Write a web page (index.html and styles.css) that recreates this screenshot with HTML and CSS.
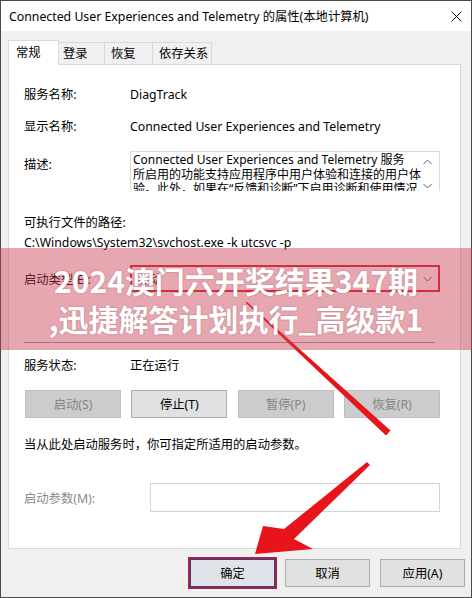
FILE: index.html
```html
<!DOCTYPE html>
<html lang="zh-CN">
<head>
    <meta charset="UTF-8">
    <title>Connected User Experiences and Telemetry 的属性</title>
    <link rel="stylesheet" href="styles.css">
</head>
<body>
    <div class="window">
        <div class="titlebar">
            <span class="title">Connected User Experiences and Telemetry 的属性(本地计算机)</span>
            <svg class="close" width="11" height="11" viewBox="0 0 11 11">
                <path d="M0.5 0.5 L10.5 10.5 M10.5 0.5 L0.5 10.5" stroke="#111" stroke-width="1" fill="none"/>
            </svg>
        </div>

        <div class="tabs">
            <div class="tab active">常规</div>
            <div class="tab tab-login">登录</div>
            <div class="tab tab-recover">恢复</div>
            <div class="tab tab-deps">依存关系</div>
        </div>

        <div class="panel">
            <div class="row">
                <span class="label">服务名称:</span>
                <span>DiagTrack</span>
            </div>
            <div class="row row-display">
                <span class="label">显示名称:</span>
                <span>Connected User Experiences and Telemetry</span>
            </div>
            <div class="row row-desc">
                <span class="label label-top">描述:</span>
                <div class="textbox">
                    <div class="textbox-text">Connected User Experiences and Telemetry 服务<br>所启用的功能支持应用程序中用户体验和连接的用户体<br>验。此外，如果在“反馈和诊断”下启用诊断和使用情况</div>
                    <div class="scroll">
                        <svg width="9" height="6" viewBox="0 0 9 6"><path d="M0.5 5 L4.5 1 L8.5 5" stroke="#606060" fill="none"/></svg>
                        <svg width="9" height="6" viewBox="0 0 9 6"><path d="M0.5 1 L4.5 5 L8.5 1" stroke="#606060" fill="none"/></svg>
                    </div>
                </div>
            </div>
            <div class="row row-exe">可执行文件的路径:</div>
            <div class="row">C:\Windows\System32\svchost.exe -k utcsvc -p</div>
            <div class="row row-startup">
                <span class="label">启动类型(E):</span>
                <div class="select">
                    <span>自动</span>
                    <svg width="9" height="6" viewBox="0 0 9 6"><path d="M0.5 1 L4.5 5 L8.5 1" stroke="#606060" fill="none"/></svg>
                </div>
            </div>
            <div class="separator"></div>
            <div class="row row-status">
                <span class="label">服务状态:</span>
                <span>正在运行</span>
            </div>
            <div class="service-buttons">
                <div class="btn disabled">启动(S)</div>
                <div class="btn">停止(T)</div>
                <div class="btn disabled">暂停(P)</div>
                <div class="btn disabled">恢复(R)</div>
            </div>
            <div class="row row-hint">当从此处启动服务时，你可指定所适用的启动参数。</div>
            <div class="row row-param">
                <span class="label label-param">启动参数(M):</span>
                <div class="input"></div>
            </div>
        </div>

        <div class="footer">
            <div class="btn dlg-btn ok">确定</div>
            <div class="btn dlg-btn">取消</div>
            <div class="btn dlg-btn">应用(A)</div>
        </div>

        <!-- annotation arrows drawn on the screenshot -->
        <svg class="arrows" width="472" height="598" viewBox="0 0 472 598">
            <polygon points="245.5,302.5 246.5,301.5 390.5,430.5 386,435.5" fill="#e8141b"/>
            <polygon points="255,554 263,526 284,529 367,462 370,465 294,539 313,549" fill="#e8141b"/>
        </svg>

        <div class="banner">
            <div>2024澳门六开奖结果347期</div>
            <div>,迅捷解答计划执行_高级款1</div>
        </div>
    </div>
</body>
</html>
```

FILE: styles.css
```css
/* Base */
* {
    margin: 0;
    padding: 0;
    box-sizing: border-box;
}

body {
    font-family: "Noto Sans", "Noto Sans CJK SC", sans-serif;
    font-size: 12.3px;
    color: #000;
    background: #fff;
}

/* Dialog window */
.window {
    position: relative;
    width: 472px;
    height: 598px;
    border: 1px solid #4a4a4a;
    background: #f0f0f0;
    display: flex;
    flex-direction: column;
}

.titlebar {
    height: 30px;
    background: #fff;
    display: flex;
    align-items: center;
    justify-content: space-between;
    padding: 0 9px 0 8px;
}

.close {
    display: block;
}

/* Tabs */
.tabs {
    display: flex;
    align-items: flex-start;
    margin-top: 9px;
    padding-left: 7px;
    position: relative;
    z-index: 1;
}

.tab {
    height: 22px;
    margin-top: 2px;
    line-height: 21px;
    padding-left: 6px;
    border: 1px solid #d9d9d9;
    border-left: none;
    border-bottom: none;
}

.tab.active {
    width: 51px;
    height: 25px;
    margin-top: 0;
    padding-left: 7px;
    line-height: 24px;
    background: #fff;
    border-left: 1px solid #d9d9d9;
}

.tab-login { width: 46px; padding-left: 4px; }
.tab-recover { width: 48px; }
.tab-deps { width: 59px; }

/* Main panel */
.panel {
    height: 485px;
    margin: -1px 10px 0 7px;
    padding: 19px 20px 0 15px;
    background: #fff;
    border: 1px solid #d9d9d9;
}

.row {
    display: flex;
    align-items: center;
    height: 20px;
}

.label {
    width: 106px;
    flex-shrink: 0;
}

.row-display { margin-top: 12px; }

.row-desc {
    margin-top: 15px;
    height: 40px;
    align-items: flex-start;
}

.label-top {
    padding-top: 4px;
    line-height: 20px;
}

.textbox {
    width: 310px;
    height: 40px;
    border: 1px solid #dadada;
    border-bottom: none;
    display: flex;
    overflow: hidden;
}

.textbox-text {
    flex: 1;
    padding: 1px 0 0 2px;
    font-size: 12px;
    line-height: 14.5px;
    white-space: nowrap;
    overflow: hidden;
}

.scroll {
    width: 18px;
    flex-shrink: 0;
    display: flex;
    flex-direction: column;
    justify-content: space-between;
    align-items: center;
    padding: 7px 5px 2px 0;
}

.row-exe { margin-top: 21px; }

.row-startup {
    margin-top: 13px;
    height: 27px;
}

.select {
    width: 311px;
    height: 27px;
    border: 2px solid #d9262c;
    display: flex;
    align-items: center;
    justify-content: space-between;
    padding: 0 6px 0 5px;
}

.separator {
    width: 411px;
    height: 1px;
    margin-top: 50px;
    background: #a0a0a0;
}

.row-status { margin-top: 12px; }

/* Buttons */
.service-buttons {
    display: flex;
    justify-content: space-between;
    margin-top: 15px;
    padding-left: 1px;
}

.btn {
    width: 96px;
    height: 28px;
    display: flex;
    align-items: center;
    justify-content: center;
    background: #e1e1e1;
    border: 1px solid #adadad;
}

.btn.disabled {
    background: #cccccc;
    border-color: #bfbfbf;
    color: #858585;
}

.row-hint { margin-top: 16px; }

.row-param {
    margin-top: 29px;
    height: 29px;
}

.label-param {
    width: 126px;
    color: #8a8a8a;
}

.input {
    width: 290px;
    height: 29px;
    border: 1px solid #d4d4d4;
}

/* Footer */
.footer {
    display: flex;
    justify-content: flex-end;
    gap: 10px;
    margin-top: 10px;
    padding-right: 6px;
}

.dlg-btn {
    width: 85px;
}

.ok {
    border-color: #3b3f86;
    background: #e0e3ea;
    outline: 2px solid #a3243f;
    outline-offset: 0;
}

/* Overlays */
.arrows {
    position: absolute;
    top: -1px;
    left: -1px;
    pointer-events: none;
}

.banner {
    position: absolute;
    top: 247px;
    left: -1px;
    width: 472px;
    height: 102px;
    padding-top: 13px;
    background: rgba(200, 60, 80, 0.45);
    color: #fff;
    font-family: "Noto Sans CJK SC", sans-serif;
    font-weight: bold;
    font-size: 30px;
    line-height: 38px;
    text-align: center;
    text-shadow: 0 0 2px rgba(120, 40, 50, 0.4);
}
```
